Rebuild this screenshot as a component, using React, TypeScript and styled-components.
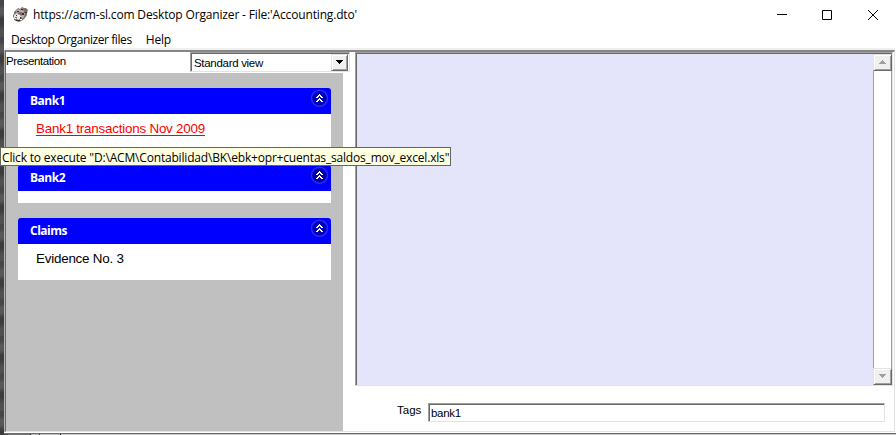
import React from "react";
import styled, { createGlobalStyle } from "styled-components";

const Global = createGlobalStyle`
  html, body { margin: 0; padding: 0; overflow: hidden; }
  * { box-sizing: border-box; }
`;

const Screen = styled.div`
  position: relative;
  width: 896px;
  height: 435px;
  display: grid;
  grid-template-columns: 4px 1fr;
  grid-template-rows: 433px 2px;
  background: #fff;
  overflow: hidden;
  color: #000;
`;

const DesktopEdge = styled.div`
  grid-row: 1 / 3;
  background: repeating-linear-gradient(172deg, #46464a 0 5px, #58585a 9px 14px, #3c3c3f 19px 24px, #505053 30px 37px);
`;

const BehindWindow = styled.div`
  border-top: 1px solid #69696c;
  background: linear-gradient(90deg, #555 0 4px, #777 4px 26px, #222 26px 27px, #b8b8b8 27px 35px, #333 35px 36px, #c0c0c0 36px 56px, #111 56px 57px, #c8c8c8 57px);
`;

const Window = styled.div`
  display: flex;
  flex-direction: column;
  background: #fff;
`;

const Label = styled.span<{ $spacing?: number; $size?: number }>`
  font-family: "Open Sans", "Noto Sans", sans-serif;
  font-size: ${(p) => p.$size ?? 12}px;
  letter-spacing: ${(p) => p.$spacing ?? 0}px;
  white-space: pre;
`;

const SmallLabel = styled(Label)`
  font-family: "Liberation Sans", Arial, sans-serif;
`;

const TitleBar = styled.div`
  display: flex;
  align-items: center;
  height: 29px;
  padding-left: 8px;
`;

const AppIcon = styled.svg`
  width: 17px;
  height: 17px;
  margin-right: 4px;
`;

const Controls = styled.div`
  display: flex;
  margin-left: auto;
`;

const Control = styled.div`
  width: 46px;
  height: 29px;
  display: grid;
  place-items: center;
  svg { display: block; }
`;

const MenuBar = styled.div`
  display: flex;
  gap: 14px;
  height: 21px;
  padding-left: 7px;
  line-height: 22px;
`;

const Client = styled.div`
  display: flex;
  height: 382px;
  margin-left: 1px;
  margin-right: 1px;
  border-style: solid;
  border-width: 2px 1px 1px;
  border-color: #868686 #e3e3e3 #e3e3e3 #696969;
  box-shadow: 0 -2px 0 #f0f0f0, -1px 0 0 #b4b4b4;
`;

const Sidebar = styled.div`
  width: 337px;
  display: flex;
  flex-direction: column;
`;

const ViewBar = styled.div`
  display: flex;
  height: 21px;
  width: 344px;
  line-height: 15px;
`;

const ViewName = styled.div`
  width: 184px;
`;

const sunken = `
  border-style: solid;
  border-width: 1px;
  border-color: #a0a0a0 #e3e3e3 #e3e3e3 #a0a0a0;
  box-shadow: inset 1px 1px 0 #696969;
`;

const Select = styled.div`
  ${sunken}
  display: flex;
  justify-content: space-between;
  width: 160px;
  height: 20px;
  padding: 1px 1px 0 3px;
  line-height: 18px;
`;

const Button = styled.div<{ $w: number; $h: number }>`
  display: grid;
  place-items: center;
  width: ${(p) => p.$w}px;
  height: ${(p) => p.$h}px;
  background: #f0f0f0;
  border: 1px solid;
  border-color: #e3e3e3 #696969 #696969 #e3e3e3;
  box-shadow: inset 1px 1px 0 #fff, inset -1px -1px 0 #a0a0a0;
  svg { display: block; }
`;

const Groups = styled.div`
  flex: 1;
  display: flex;
  flex-direction: column;
  gap: 15px;
  padding: 15px 12px 0;
  background: #c0c0c0;
`;

const GroupHeader = styled.div`
  display: flex;
  justify-content: space-between;
  height: 26px;
  padding: 0 2px 0 12px;
  background: #00f;
  border-radius: 3px 3px 0 0;
  color: #fff;
  line-height: 26px;
  ${Label} { font-weight: 700; }
`;

const GroupBody = styled.div<{ $h: number }>`
  height: ${(p) => p.$h}px;
  padding-left: 18px;
  background: #fff;
  line-height: 27px;
`;

const Item = styled(SmallLabel)<{ $active?: boolean }>`
  color: ${(p) => (p.$active ? "#f00" : "#000")};
  text-decoration: ${(p) => (p.$active ? "underline" : "none")};
  text-decoration-thickness: 1px;
  text-underline-offset: 2px;
`;

const Details = styled.div`
  flex: 1;
  padding-left: 12px;
`;

const Viewer = styled.div`
  ${sunken}
  display: flex;
  width: 538px;
  height: 334px;
  padding: 1px 0 0 1px;
`;

const ViewerPage = styled.div`
  flex: 1;
  background: #e4e4fa;
`;

const ScrollBar = styled.div`
  display: flex;
  flex-direction: column;
  justify-content: space-between;
  width: 19px;
  background: #fff;
  border-left: 1px solid #a0a0a0;
  border-right: 1px solid #a0a0a0;
  ${Button} { margin-left: -1px; }
`;

const TagsRow = styled.div`
  display: flex;
  margin-top: 17px;
  padding-left: 42px;
  line-height: 12px;
`;

const TagsCaption = styled.div`
  width: 31px;
`;

const TagsField = styled.div`
  ${sunken}
  width: 457px;
  height: 19px;
  padding-left: 2px;
  line-height: 15px;
`;

const Tooltip = styled.div`
  position: absolute;
  left: 0;
  top: 147px;
  width: 451px;
  height: 19px;
  padding-left: 1px;
  line-height: 17px;
  background: #ffffe1;
  border: 1px solid #646464;
`;

const ArrowIcon = ({ up, color }: { up?: boolean; color: string }) => (
  <svg width="9" height="5" shapeRendering="crispEdges">
    <path
      fill={color}
      d={up ? "M4 0h1v1h1v1h1v1h1v1h-7v-1h1v-1h1v-1h1z" : "M1 0h7v1h-1v1h-1v1h-1v1h-1v-1h-1v-1h-1v-1h-1z"}
    />
  </svg>
);

const CollapseIcon = () => (
  <svg width="19" height="20" viewBox="0 0 19 20">
    <circle cx="9.5" cy="10.3" r="8" fill="#0000b4" stroke="#2828ff" strokeWidth="1.5" />
    <path
      fill="#fff"
      shapeRendering="crispEdges"
      d="M9 6h1v1h1v1h1v1h1v1h-2v-1h-1v-1h-1v1h-1v1h-2v-1h1v-1h1v-1h1zM9 10h1v1h1v1h1v1h1v1h-2v-1h-1v-1h-1v1h-1v1h-2v-1h1v-1h1v-1h1z"
    />
  </svg>
);

const OrganizerIcon = () => (
  <AppIcon viewBox="0 0 17 17">
    <path fill="#7a7370" d="M4 4l2-2 2 1 2-2 2 1 2 0 2 2-1 3 0 2-2 3-2 2-2 1-2 1-3-1-2-1 0-2-1-1 0-2 1-1 0-2z" />
    <path fill="#b4b2b0" d="M6 3l2 1 3-2-1 3 3-1-2 3-4-1-2 1-1-2zM10 9l3-2-1 4-2 2z" />
    <path fill="#ece6e0" d="M2 9l3-2 2 2 3 1-2 3-2 1-2-2-2 1z" />
    <path fill="#a0604f" d="M12 3h2v2h-2zM3 11h2v1h-2zM8 6h2v1h-2z" />
    <path fill="#34302f" d="M5 5h2v1h-2zM9 3h2v1h-2zM10 7h2v2h-2zM8 11h1v2h-1zM4 9h1v1h-1zM13 6h2v1h-2zM4 14h4v1h-4z" />
    <path fill="#fff" d="M6 9h2v1h-2zM8 13h2v1h-2zM3 12h1v1h-1z" />
  </AppIcon>
);

const groups = [
  { name: "Bank1", height: 36, item: "Bank1 transactions Nov 2009", active: true },
  { name: "Bank2", height: 12 },
  { name: "Claims", height: 36, item: "Evidence No. 3" },
];

export default function App() {
  return (
    <Screen>
      <Global />
      <DesktopEdge />
      <Window>
        <TitleBar>
          <OrganizerIcon />
          <Label $spacing={-0.16}>https://acm-sl.com Desktop Organizer - File:'Accounting.dto'</Label>
          <Controls>
            <Control>
              <svg width="12" height="10"><path d="M2 4.5h10" stroke="#000" /></svg>
            </Control>
            <Control>
              <svg width="10" height="10"><path d="M.5.5h9v9h-9z" fill="none" stroke="#000" /></svg>
            </Control>
            <Control>
              <svg width="10" height="10"><path d="M0 0l10 10M10 0L0 10" stroke="#000" /></svg>
            </Control>
          </Controls>
        </TitleBar>
        <MenuBar>
          <Label $spacing={-0.41}>Desktop Organizer files</Label>
          <Label $spacing={-0.2}>Help</Label>
        </MenuBar>
        <Client>
          <Sidebar>
            <ViewBar>
              <ViewName><SmallLabel $size={11.5} $spacing={-0.4}>Presentation</SmallLabel></ViewName>
              <Select>
                <SmallLabel $size={11.5} $spacing={-0.3}>Standard view</SmallLabel>
                <Button $w={17} $h={17}><ArrowIcon color="#000" /></Button>
              </Select>
            </ViewBar>
            <Groups>
              {groups.map((g) => (
                <div key={g.name}>
                  <GroupHeader>
                    <Label $spacing={-0.5}>{g.name}</Label>
                    <CollapseIcon />
                  </GroupHeader>
                  <GroupBody $h={g.height}>
                    {g.item && <Item $size={13.4} $spacing={-0.22} $active={g.active}>{g.item}</Item>}
                  </GroupBody>
                </div>
              ))}
            </Groups>
          </Sidebar>
          <Details>
            <Viewer>
              <ViewerPage />
              <ScrollBar>
                <Button $w={19} $h={17}><ArrowIcon up color="#a0a0a0" /></Button>
                <Button $w={19} $h={17}><ArrowIcon color="#a0a0a0" /></Button>
              </ScrollBar>
            </Viewer>
            <TagsRow>
              <TagsCaption><SmallLabel $size={11.5}>Tags</SmallLabel></TagsCaption>
              <TagsField><SmallLabel $size={11.5} $spacing={-0.3}>bank1</SmallLabel></TagsField>
            </TagsRow>
          </Details>
        </Client>
      </Window>
      <BehindWindow />
      <Tooltip>
        <Label $spacing={-0.18}>Click to execute "D:\ACM\Contabilidad\BK\ebk+opr+cuentas_saldos_mov_excel.xls"</Label>
      </Tooltip>
    </Screen>
  );
}
